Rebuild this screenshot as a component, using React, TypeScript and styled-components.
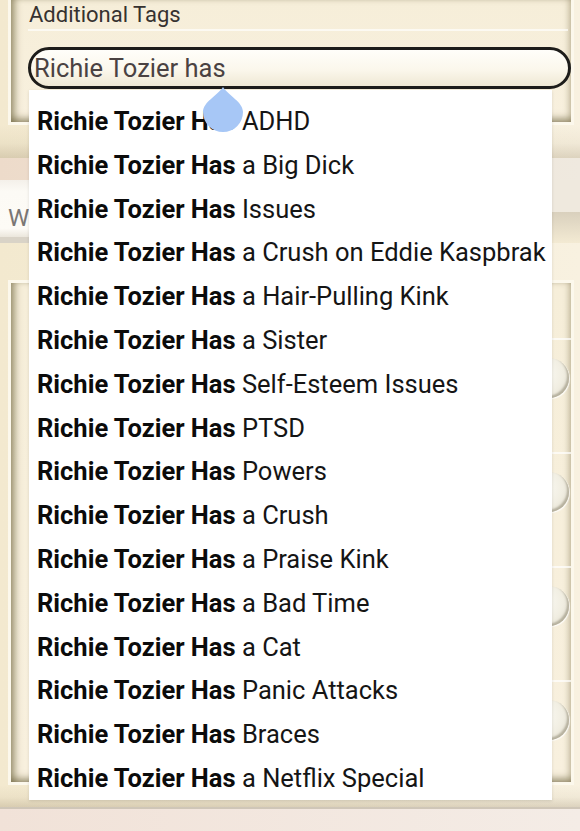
import styled, { createGlobalStyle } from "styled-components";

const GlobalStyle = createGlobalStyle`
    html, body {
        margin: 0;
        padding: 0;
        background: #f4ebd3;
    }
    body {
        font-family: Roboto, "Noto Sans", "Liberation Sans", sans-serif;
        overflow: hidden;
    }
`

const suggestions = [
    "ADHD",
    "a Big Dick",
    "Issues",
    "a Crush on Eddie Kaspbrak",
    "a Hair-Pulling Kink",
    "a Sister",
    "Self-Esteem Issues",
    "PTSD",
    "Powers",
    "a Crush",
    "a Praise Kink",
    "a Bad Time",
    "a Cat",
    "Panic Attacks",
    "Braces",
    "a Netflix Special",
]

const Page = styled.div`
    width: 580px;
    height: 831px;
    overflow: hidden;
    background: linear-gradient(90deg, #f3e9cf 0%, #f6eed9 60%, #f8f1e0 100%);
    display: flex;
    flex-direction: column;
`

const Panel = styled.section<{ $height: number }>`
    box-sizing: border-box;
    margin: 0 6px 0 8px;
    height: ${p => p.$height}px;
    border: 3px solid #fcf8ec;
    background: linear-gradient(180deg, #f6eed9 0%, #f8f0de 100%);
    box-shadow: inset 7px 0 7px -3px rgba(95, 85, 45, 0.55),
    inset -5px 0 6px -3px rgba(120, 110, 70, 0.35),
    inset 0 -7px 7px -3px rgba(95, 85, 45, 0.5);
`

const TagsPanel = styled(Panel)`
    border-top: none;
    padding: 0 0 0 17px;
`

const Label = styled.div`
    font-size: 22px;
    line-height: 29px;
    color: #363230;
    padding-left: 1px;
    margin-right: 3px;
    border-bottom: 2px solid rgba(255, 255, 255, 0.65);
`

const Field = styled.div`
    position: relative;
    margin-top: 16px;
`

const Input = styled.div`
    box-sizing: border-box;
    height: 42px;
    border: 3px solid #1d1c1a;
    border-radius: 21px;
    background: linear-gradient(180deg, #fffefa 0%, #fbf7ec 55%, #efe8d4 100%);
    padding: 1px 0 0 3px;
    font-size: 25.5px;
    line-height: 35px;
    color: #4a4242;
    white-space: nowrap;
`

const Dropdown = styled.ul`
    position: absolute;
    top: 43px;
    left: 1px;
    box-sizing: border-box;
    width: 523px;
    height: 710px;
    margin: 0;
    padding: 10px 0 0;
    list-style: none;
    background: #ffffff;
    box-shadow: 0 1px 3px rgba(0, 0, 0, 0.12);
    z-index: 2;
`

const Option = styled.li`
    height: 43.8px;
    line-height: 43.8px;
    padding-left: 8px;
    font-size: 25.5px;
    color: #151515;
    white-space: nowrap;

    b {
        font-weight: 700;
        color: #0b0b0b;
    }
`

const Handle = styled.svg`
    position: absolute;
    left: 174px;
    top: 40px;
    z-index: 3;
`

const Gap = styled.div<{ $height: number, $shade?: boolean }>`
    height: ${p => p.$height}px;
    background: ${p => p.$shade
            ? "linear-gradient(180deg, rgba(0,0,0,0) 0%, rgba(120,100,60,0.06) 55%, rgba(110,90,55,0.2) 100%)"
            : "transparent"};
`

const HeaderStrip = styled.div`
    height: 22px;
    background: linear-gradient(90deg, #eddbca 0%, #efe3d6 50%, #efe9df 100%);
`

const SummaryRow = styled.div`
    display: flex;
    height: 63px;
`

const SummaryBox = styled.div`
    box-sizing: border-box;
    width: 545px;
    padding: 24px 0 0 8px;
    background: linear-gradient(180deg, #f4f0ea 0%, #fcfaf5 20%, #fdfbf6 85%, #ebe6dc 100%);
    border-bottom: 6px solid #d9d3c7;
    font-size: 24px;
    color: #7b7774;
`

const SummaryAside = styled.div`
    flex: 1;
    display: flex;
    flex-direction: column;

    &::before {
        content: "";
        height: 32px;
        background: #efe9de;
    }

    &::after {
        content: "";
        flex: 1;
        background: linear-gradient(180deg, #d9d0bd 0%, #f3ead3 100%);
    }
`

const OptionRow = styled.div<{ $height: number }>`
    box-sizing: border-box;
    height: ${p => p.$height}px;
    margin-left: 30px;
    padding: 18px 2px 0 0;
    display: flex;
    justify-content: flex-end;
    border-bottom: 2px solid rgba(255, 255, 255, 0.7);

    &:last-child {
        border-bottom: none;
    }
`

const Radio = styled.span`
    width: 40px;
    height: 40px;
    border-radius: 50%;
    background: radial-gradient(circle at 35% 40%, #fbfaf4 0%, #f1eee2 55%, #dcd8c8 100%);
    box-shadow: inset -2px -2px 2px rgba(90, 80, 55, 0.35), 1px 1px 1px rgba(255, 255, 255, 0.8);
`

const BottomStrip = styled.div`
    flex: 1;
    border-top: 2px solid #cfc6b8;
    background: linear-gradient(90deg, #f1e2d8 0%, #f4ece6 100%);
`

export default function App() {
    return (
        <Page>
            <GlobalStyle/>
            <TagsPanel $height={125}>
                <Label>Additional Tags</Label>
                <Field>
                    <Input>Richie Tozier has</Input>
                    <Dropdown>
                        {suggestions.map(s => (
                            <Option key={s}><b>Richie Tozier Has</b> {s}</Option>
                        ))}
                    </Dropdown>
                    <Handle width="42" height="46" viewBox="0 0 42 46">
                        <path d="M21 0 C 27 9, 41 15, 41 25 A 20 20 0 0 1 1 25 C 1 15, 15 9, 21 0 Z" fill="#a7c7f6"/>
                    </Handle>
                </Field>
            </TagsPanel>
            <Gap $height={33} $shade/>
            <HeaderStrip/>
            <SummaryRow>
                <SummaryBox>W</SummaryBox>
                <SummaryAside/>
            </SummaryRow>
            <Gap $height={37}/>
            <Panel $height={505}>
                <OptionRow $height={57}/>
                <OptionRow $height={114}><Radio/></OptionRow>
                <OptionRow $height={114}><Radio/></OptionRow>
                <OptionRow $height={114}><Radio/></OptionRow>
                <OptionRow $height={100}><Radio/></OptionRow>
            </Panel>
            <Gap $height={22} $shade/>
            <BottomStrip/>
        </Page>
    );
}
